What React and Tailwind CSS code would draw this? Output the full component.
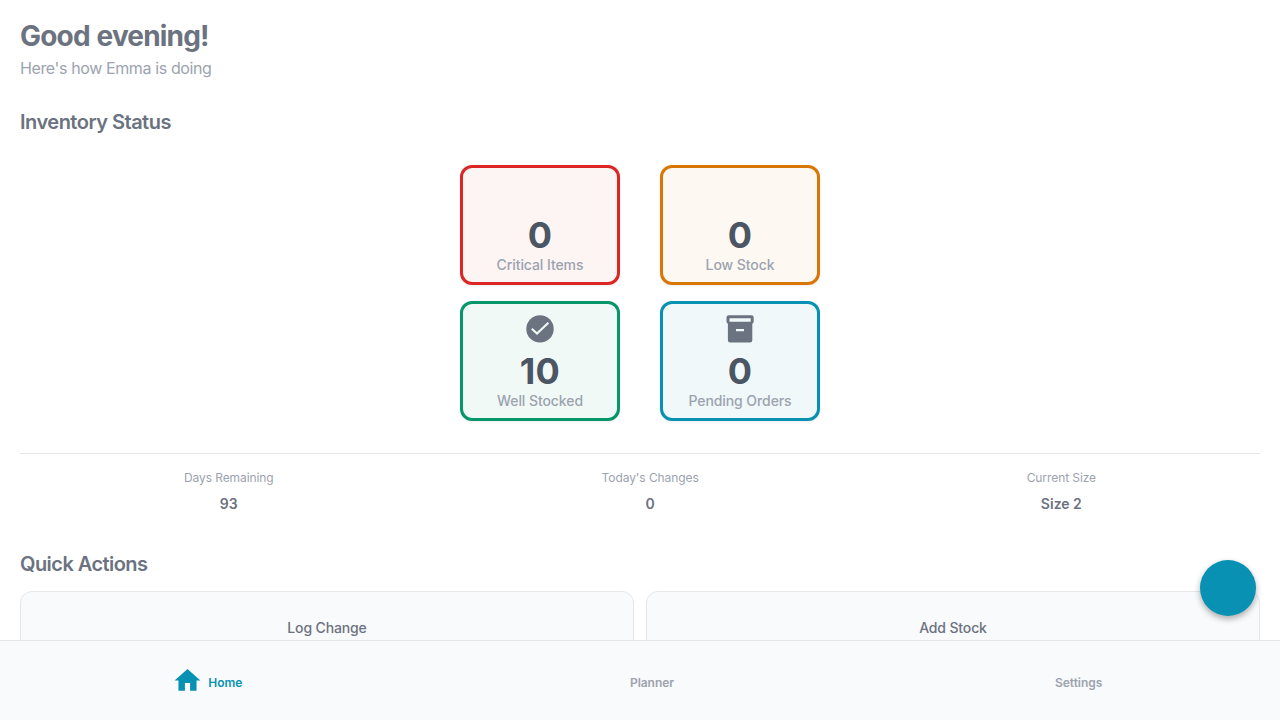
import { MdHome } from 'react-icons/md';

const cards = [
  { value: '0', label: 'Critical Items', style: 'border-[#dc2626] bg-[#fdf4f4]', icon: null },
  { value: '0', label: 'Low Stock', style: 'border-[#d97706] bg-[#fdf8f2]', icon: null },
  { value: '10', label: 'Well Stocked', style: 'border-[#059669] bg-[#f0f9f6]', icon: 'check' },
  { value: '0', label: 'Pending Orders', style: 'border-[#0891b2] bg-[#f0f8fa]', icon: 'archive' },
];

const stats = [
  ['Days Remaining', '93'],
  ["Today's Changes", '0'],
  ['Current Size', 'Size 2'],
];

function CheckIcon() {
  return (
    <svg width="32" height="32" viewBox="0 0 32 32" fill="none">
      <circle cx="16" cy="15.9" r="13.7" fill="currentColor" />
      <path d="M7.800 15.800 13 20.600 24.400 9.700" stroke="#f0f9f6" strokeWidth="2.1" />
    </svg>
  );
}

function ArchiveIcon() {
  return (
    <svg width="32" height="32" viewBox="0 0 32 32" fill="currentColor" fillRule="evenodd">
      <path d="M4.8 2.3h22.6a2.3 2.3 0 0 1 2.3 2.3v4a2.3 2.3 0 0 1-1.4 2.1v16.5a2.3 2.3 0 0 1-2.3 2.3H6.2a2.3 2.3 0 0 1-2.3-2.3V10.700a2.3 2.3 0 0 1-1.4-2.1v-4a2.3 2.3 0 0 1 2.3-2.3zM5.500 5.200v3.600h21.200V5.200zM12 16v2.200h8V16z" />
    </svg>
  );
}

function Card({ value, label, style, icon }) {
  return (
    <div className={`flex h-[120px] w-40 flex-col items-center rounded-xl border-[3px] pt-[5px] shadow-[0_1px_3px_rgba(0,0,0,0.08)] ${style}`}>
      <div className="flex h-10 items-center text-[#6b7280]">
        {icon === 'check' && <CheckIcon />}
        {icon === 'archive' && <ArchiveIcon />}
      </div>
      <div className="mt-0.5 text-[36px] leading-[40px] font-bold tracking-[0.4px] text-[#4b5563]">{value}</div>
      <div className="mt-px text-[14px] leading-[18px] font-medium tracking-[-0.08px] text-[#9ca3af]">{label}</div>
    </div>
  );
}

export default function App() {
  return (
    <div className="flex h-screen flex-col overflow-hidden bg-white font-['Inter',sans-serif] text-[#6b7280]">
      <main className="min-h-0 flex-1 overflow-hidden px-5 pt-5">
        <h1 className="text-[28px] leading-[33px] font-bold tracking-[-0.82px] [word-spacing:1px]">Good evening!</h1>
        <p className="mt-[3px] text-[16px] leading-6 tracking-[-0.38px] text-[#9ca3af]">Here's how Emma is doing</p>
        <h2 className="mt-7 text-[20px] leading-7 font-semibold tracking-[-0.5px]">Inventory Status</h2>
        <div className="mx-auto mt-[29px] grid w-[360px] grid-cols-2 justify-between gap-x-10 gap-y-4">
          {cards.map((c) => <Card key={c.label} {...c} />)}
        </div>
        <div className="mt-8 flex justify-around border-t border-[#e5e7eb] pt-4">
          {stats.map(([label, value]) => (
            <div key={label} className="flex flex-col items-center">
              <span className="text-[12px] leading-4 tracking-[-0.08px] text-[#9ca3af]">{label}</span>
              <span className="mt-2 text-[14px] leading-5 font-semibold">{value}</span>
            </div>
          ))}
        </div>
        <h2 className="mt-9 text-[20px] leading-7 font-semibold tracking-[-0.55px]">Quick Actions</h2>
        <div className="mt-[13px] grid grid-cols-2 gap-3">
          {['Log Change', 'Add Stock'].map((label) => (
            <button key={label} className="flex h-20 justify-center rounded-xl border border-[#e5e7eb] bg-[#f9fafb] pt-[26px] text-[14px] leading-5 font-medium tracking-[-0.14px]">{label}</button>
          ))}
        </div>
      </main>
      <nav className="grid h-20 shrink-0 grid-cols-3 border-t border-[#e5e7eb] bg-[#f9fafb] pt-1 text-[12px] font-semibold tracking-[-0.04px] text-[#9ca3af]">
        <a className="flex items-center justify-center text-[#0891b2]">
          <span className="mr-[5px] -ml-3 pb-1"><MdHome size={31} /></span>Home
        </a>
        <a className="flex items-center justify-center pl-6">Planner</a>
        <a className="flex items-center justify-center pl-6">Settings</a>
      </nav>
      <button aria-label="Add" className="fixed right-6 bottom-[104px] size-14 rounded-full bg-[#0891b2] shadow-[0_3px_6px_rgba(0,0,0,0.32)]" />
    </div>
  );
}
